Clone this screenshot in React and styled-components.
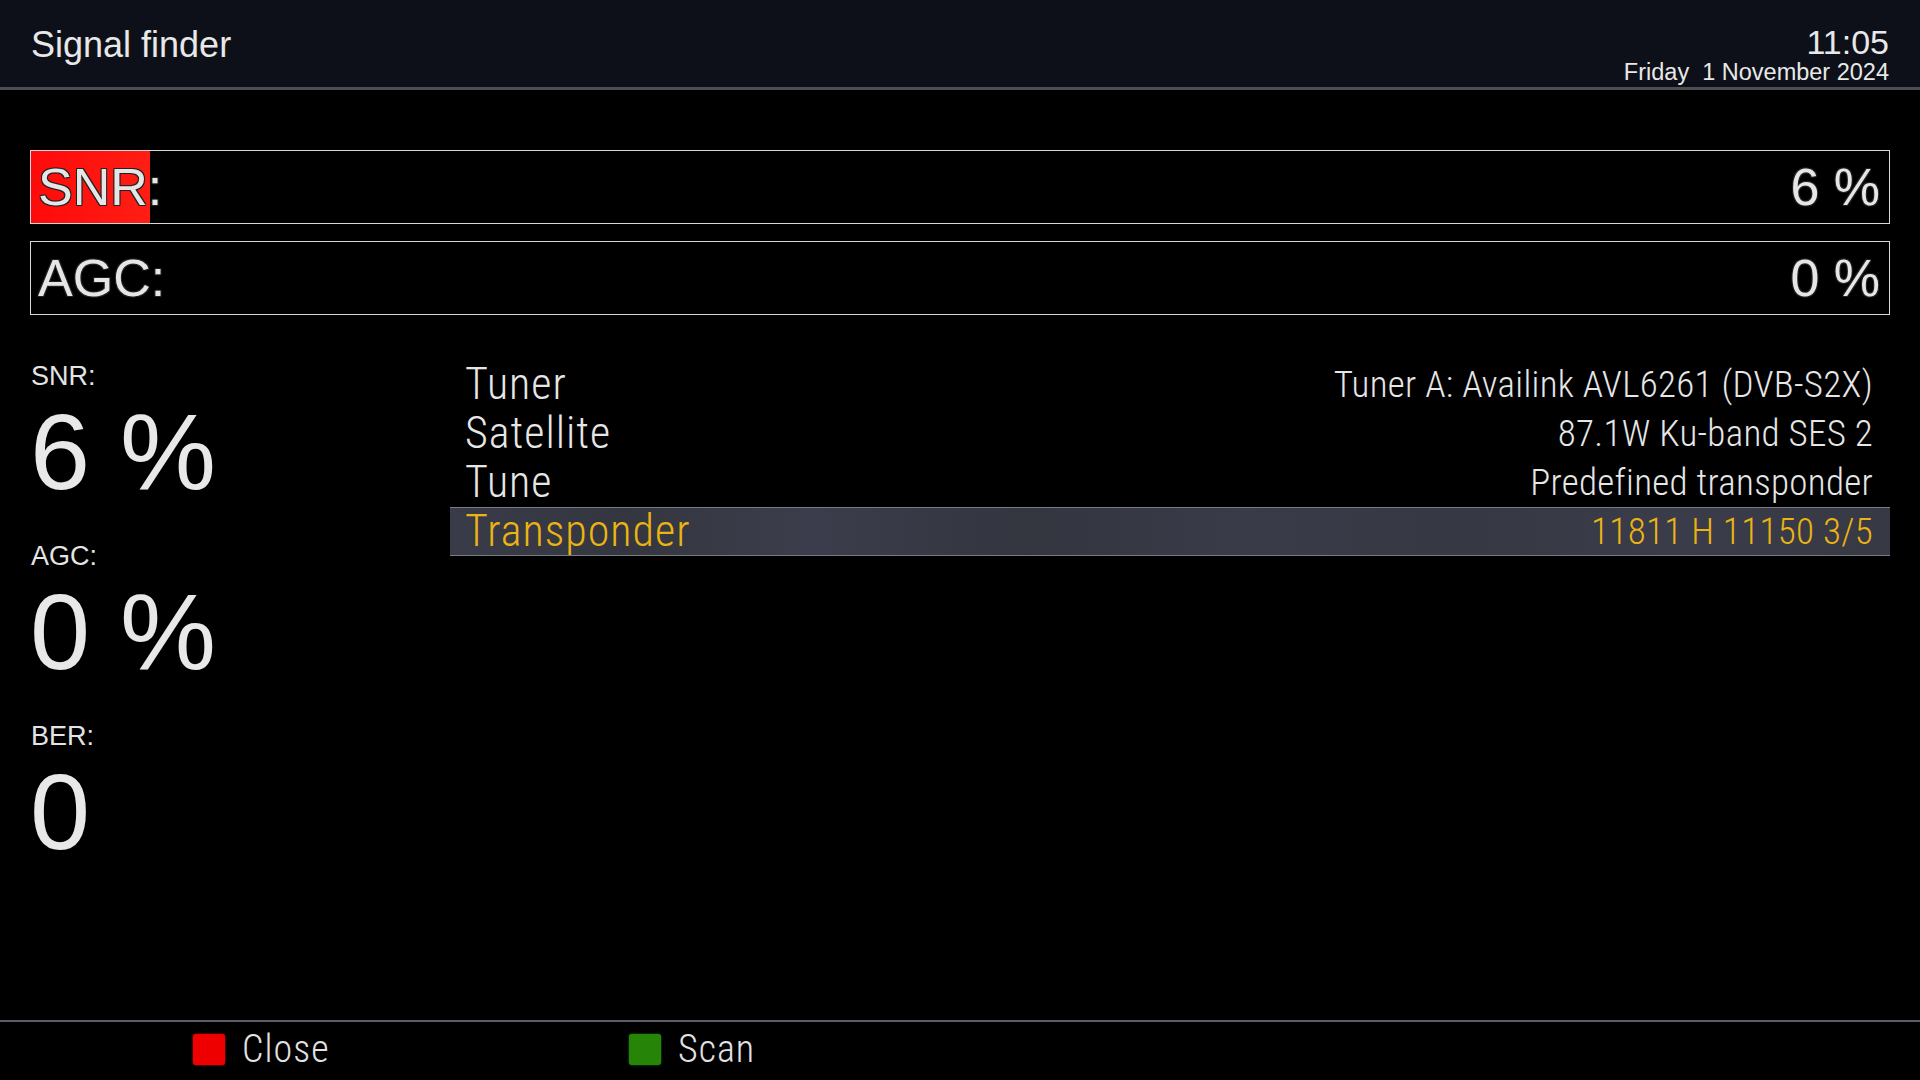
import React from "react";
import styled, { createGlobalStyle } from "styled-components";

const Global = createGlobalStyle`
  html, body { margin: 0; padding: 0; background: #000; }
  body { width: 1920px; height: 1080px; overflow: hidden; }
  * { box-sizing: border-box; }
`;

const Screen = styled.div`
  width: 1920px;
  height: 1080px;
  display: flex;
  flex-direction: column;
  background: #000;
  color: #e6e6e6;
  font-family: "Liberation Sans", Arial, sans-serif;
`;

const Header = styled.header`
  height: 90px;
  flex: none;
  display: flex;
  justify-content: space-between;
  align-items: flex-start;
  padding: 0 31px;
  background: #0d1018;
  border-bottom: 3px solid #4d4e54;
`;

const Title = styled.h1`
  margin: 0;
  padding-top: 27px;
  font-size: 36px;
  line-height: 36px;
  font-weight: 400;
  color: #e8e8e8;
`;

const Clock = styled.div`
  padding-top: 25px;
  display: flex;
  flex-direction: column;
  align-items: flex-end;
  color: #e8e8e8;
`;

const Time = styled.div`
  font-size: 34px;
  line-height: 34px;
`;

const DateLine = styled.div`
  margin-top: 2px;
  font-size: 23.5px;
  line-height: 22px;
  white-space: pre;
`;

const Main = styled.main`
  flex: 1;
  display: flex;
  flex-direction: column;
  padding: 60px 30px 0;
`;

const Bars = styled.div`
  display: flex;
  flex-direction: column;
  gap: 17px;
`;

const Bar = styled.div`
  position: relative;
  height: 74px;
  border: 1px solid #d8d8d8;
  display: flex;
  align-items: center;
  justify-content: space-between;
  padding: 0 9px 0 7px;
`;

const Fill = styled.div`
  position: absolute;
  left: 0;
  top: 0;
  bottom: 0;
  background: linear-gradient(90deg, #ff0a0a, #ff1e14);
`;

const BarText = styled.span`
  position: relative;
  font-size: 52px;
  line-height: 52px;
  color: #e6e6e6;
  text-shadow: -1px -1px 0 #222, 1px -1px 0 #222, -1px 1px 0 #222, 1px 1px 0 #222;
`;

const Content = styled.div`
  display: flex;
  margin-top: 45px;
`;

const Stats = styled.div`
  width: 420px;
  flex: none;
  padding-top: 3px;
  padding-left: 1px;
  display: flex;
  flex-direction: column;
  gap: 37px;
`;

const Stat = styled.div`
  display: flex;
  flex-direction: column;
  gap: 8px;
`;

const StatLabel = styled.div`
  font-size: 27px;
  line-height: 27px;
  color: #e4e4e4;
`;

const StatValue = styled.div`
  font-size: 108px;
  line-height: 108px;
  color: #e8e8e8;
  margin-left: -1px;
`;

const List = styled.div`
  flex: 1;
  display: flex;
  flex-direction: column;
  font-family: "Roboto Condensed", Roboto, "Liberation Sans", sans-serif;
  font-weight: 300;
`;

const Row = styled.div`
  height: 49px;
  display: flex;
  align-items: center;
  justify-content: space-between;
  padding: 0 17px 0 15px;
  color: ${(p) => (p.$active ? "#ebb413" : "#e6e6e6")};
  border-top: 1px solid ${(p) => (p.$active ? "#7a7b80" : "transparent")};
  border-bottom: 1px solid ${(p) => (p.$active ? "#7a7b80" : "transparent")};
  background: ${(p) =>
    p.$active
      ? "linear-gradient(90deg, #393b49 0%, #34363f 12%, #3b3d4c 25%, #33353f 40%, #3a3b49 55%, #363843 70%, #3b3c4a 85%, #373944 100%)"
      : "transparent"};
`;

const RowLabel = styled.span`
  font-size: 44px;
  line-height: 47px;
  letter-spacing: 1px;
`;

const RowValue = styled.span`
  font-size: 37px;
  line-height: 47px;
  letter-spacing: 0.3px;
`;

const Footer = styled.footer`
  height: 60px;
  flex: none;
  border-top: 2px solid #5b5e66;
  display: flex;
  align-items: center;
  padding: 0 0 4px 193px;
  font-family: "Roboto Condensed", Roboto, "Liberation Sans", sans-serif;
  font-weight: 300;
`;

const Key = styled.div`
  width: 436px;
  display: flex;
  align-items: center;
  gap: 17px;
`;

const KeySwatch = styled.span`
  width: 32px;
  height: 31px;
  border-radius: 3px;
  background: ${(p) => p.$color};
  box-shadow: 0 0 2px ${(p) => p.$color};
`;

const KeyLabel = styled.span`
  font-size: 38px;
  line-height: 42px;
  letter-spacing: 1px;
  color: #e2e2e2;
`;

const rows = [
  { label: "Tuner", value: "Tuner A: Availink AVL6261 (DVB-S2X)" },
  { label: "Satellite", value: "87.1W Ku-band SES 2" },
  { label: "Tune", value: "Predefined transponder" },
  { label: "Transponder", value: "11811 H 11150 3/5", active: true },
];

export default function App() {
  const snr = 6;
  const agc = 0;
  return (
    <Screen>
      <Global />
      <Header>
        <Title>Signal finder</Title>
        <Clock>
          <Time>11:05</Time>
          <DateLine>{"Friday  1 November 2024"}</DateLine>
        </Clock>
      </Header>
      <Main>
        <Bars>
          <Bar>
            <Fill style={{ width: `${snr * 1.07}%` }} />
            <BarText>SNR:</BarText>
            <BarText>{snr} %</BarText>
          </Bar>
          <Bar>
            {agc > 0 && <Fill style={{ width: `${agc}%` }} />}
            <BarText>AGC:</BarText>
            <BarText>{agc} %</BarText>
          </Bar>
        </Bars>
        <Content>
          <Stats>
            <Stat>
              <StatLabel>SNR:</StatLabel>
              <StatValue>{snr} %</StatValue>
            </Stat>
            <Stat>
              <StatLabel>AGC:</StatLabel>
              <StatValue>{agc} %</StatValue>
            </Stat>
            <Stat>
              <StatLabel>BER:</StatLabel>
              <StatValue>0</StatValue>
            </Stat>
          </Stats>
          <List>
            {rows.map((r) => (
              <Row key={r.label} $active={r.active}>
                <RowLabel>{r.label}</RowLabel>
                <RowValue>{r.value}</RowValue>
              </Row>
            ))}
          </List>
        </Content>
      </Main>
      <Footer>
        <Key>
          <KeySwatch $color="#ee0000" />
          <KeyLabel>Close</KeyLabel>
        </Key>
        <Key>
          <KeySwatch $color="#268508" />
          <KeyLabel>Scan</KeyLabel>
        </Key>
      </Footer>
    </Screen>
  );
}
